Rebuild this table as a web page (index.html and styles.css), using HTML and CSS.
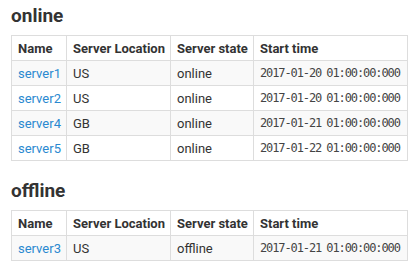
FILE: index.html
```html
<!DOCTYPE html>
<html lang="en">
<head>
    <meta charset="UTF-8">
    <title>Servers</title>
    <link rel="stylesheet" href="styles.css">
</head>
<body>
    <h2>online</h2>
    <table class="servers">
        <colgroup><col class="c-name"><col class="c-loc"><col class="c-state"><col class="c-time"></colgroup>
        <thead>
            <tr><th>Name</th><th>Server Location</th><th>Server state</th><th>Start time</th></tr>
        </thead>
        <tbody>
            <tr><td><a href="#">server1</a></td><td>US</td><td>online</td><td class="time">2017-01-20 01:00:00:000</td></tr>
            <tr><td><a href="#">server2</a></td><td>US</td><td>online</td><td class="time">2017-01-20 01:00:00:000</td></tr>
            <tr><td><a href="#">server4</a></td><td>GB</td><td>online</td><td class="time">2017-01-21 01:00:00:000</td></tr>
            <tr><td><a href="#">server5</a></td><td>GB</td><td>online</td><td class="time">2017-01-22 01:00:00:000</td></tr>
        </tbody>
    </table>

    <h2>offline</h2>
    <table class="servers">
        <colgroup><col class="c-name"><col class="c-loc"><col class="c-state"><col class="c-time"></colgroup>
        <thead>
            <tr><th>Name</th><th>Server Location</th><th>Server state</th><th>Start time</th></tr>
        </thead>
        <tbody>
            <tr><td><a href="#">server3</a></td><td>US</td><td>offline</td><td class="time">2017-01-21 01:00:00:000</td></tr>
        </tbody>
    </table>
</body>
</html>
```

FILE: styles.css
```css
body { font-family: Roboto, "Noto Sans", sans-serif; font-size: 13px; color: #333; margin: 0; padding: 0 11px; background: #fff; }
h2 { font-size: 19px; font-weight: bold; margin: 5px 0 8px; line-height: 22px; color: #333; }
.servers { border-collapse: collapse; table-layout: fixed; width: 397px; margin-bottom: 19px; }
.c-name { width: 55px; }
.c-loc { width: 104px; }
.c-state { width: 83px; }
.servers th, .servers td { border: 1px solid #ddd; padding: 0 6px; height: 24px; text-align: left; white-space: nowrap; }
.servers th { font-weight: bold; }
.servers tbody tr:nth-child(odd) { background: #f9f9f9; }
.servers a { color: #2a89d0; text-decoration: none; }
.time { font-family: "DejaVu Sans Mono", monospace; font-size: 12px; letter-spacing: -1.1px; word-spacing: -1px; color: #444; }
```
